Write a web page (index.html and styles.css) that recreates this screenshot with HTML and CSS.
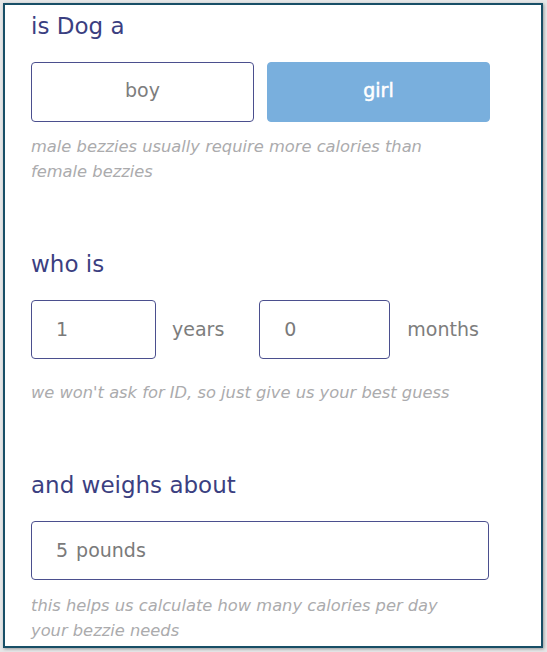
FILE: index.html
```html
<!DOCTYPE html>
<html lang="en">
<head>
<meta charset="utf-8">
<title>Dog details</title>
<link rel="stylesheet" href="styles.css">
</head>
<body>
<div class="frame">
  <section class="block block-sex">
    <h2 class="question">is Dog a</h2>
    <div class="choice-row">
      <button class="choice">boy</button>
      <button class="choice choice-active">girl</button>
    </div>
    <p class="hint hint-sex">male bezzies usually require more calories than<br>female bezzies</p>
  </section>

  <section class="block block-age">
    <h2 class="question">who is</h2>
    <div class="age-row">
      <div class="field field-years">1</div>
      <span class="unit unit-years">years</span>
      <div class="field field-months">0</div>
      <span class="unit unit-months">months</span>
    </div>
    <p class="hint hint-age">we won't ask for ID, so just give us your best guess</p>
  </section>

  <section class="block block-weight">
    <h2 class="question">and weighs about</h2>
    <div class="field field-weight"><span>5</span><span class="weight-unit">pounds</span></div>
    <p class="hint hint-weight">this helps us calculate how many calories per day<br>your bezzie needs</p>
  </section>
</div>
</body>
</html>
```

FILE: styles.css
```css
* { box-sizing: border-box; }

html, body {
  margin: 0;
  padding: 0;
}

body {
  background: #e6e7e8;
  width: 547px;
  height: 652px;
  overflow: hidden;
  font-family: "DejaVu Sans", "Open Sans", sans-serif;
}

.frame {
  margin: 3px 4px 0 3px;
  height: 645px;
  border: 2px solid #184f67;
  background: #ffffff;
  box-shadow: 1px 1px 3px rgba(0, 0, 0, 0.35);
  overflow: hidden;
  padding: 6px 0 0 26px;
}

.question {
  margin: 0;
  font-weight: 400;
  font-size: 23px;
  line-height: 30px;
  color: #3b3f81;
}

.choice-row {
  display: flex;
  gap: 13px;
  margin-top: 21px;
}

.choice {
  width: 223px;
  height: 60px;
  border: 1.5px solid #4b4f8e;
  border-radius: 4px;
  background: #ffffff;
  font-family: inherit;
  font-size: 19px;
  color: #7d7d7d;
  padding: 0 0 4px;
}

.choice-active {
  background: #79afdd;
  border-color: #79afdd;
  color: #ffffff;
  -webkit-text-stroke: 0.5px #ffffff;
}

.hint {
  margin: 0;
  font-style: italic;
  font-size: 16.3px;
  line-height: 25px;
  color: #ababad;
}

.hint-sex { margin-top: 12px; }
.hint-age { margin-top: 21px; }
.hint-weight { margin-top: 13px; }

.block-age { margin-top: 65px; }
.block-weight { margin-top: 65px; }

.block-age .age-row,
.block-weight .field { margin-top: 21px; }

.age-row {
  display: flex;
  align-items: center;
}

.field {
  height: 59px;
  border: 1.5px solid #4b4f8e;
  border-radius: 4px;
  display: flex;
  align-items: center;
  padding-left: 24px;
  padding-bottom: 2px;
  font-size: 19px;
  color: #7a7a7a;
}

.field-years { width: 125px; }
.field-months { width: 131px; }
.field-weight { width: 458px; }

.unit {
  font-size: 19px;
  color: #7d7d7d;
  margin-left: 16px;
  padding-bottom: 2px;
}

.unit-years { margin-right: 35px; }
.unit-months { margin-left: 17px; }

.weight-unit { margin-left: 8px; }
```
